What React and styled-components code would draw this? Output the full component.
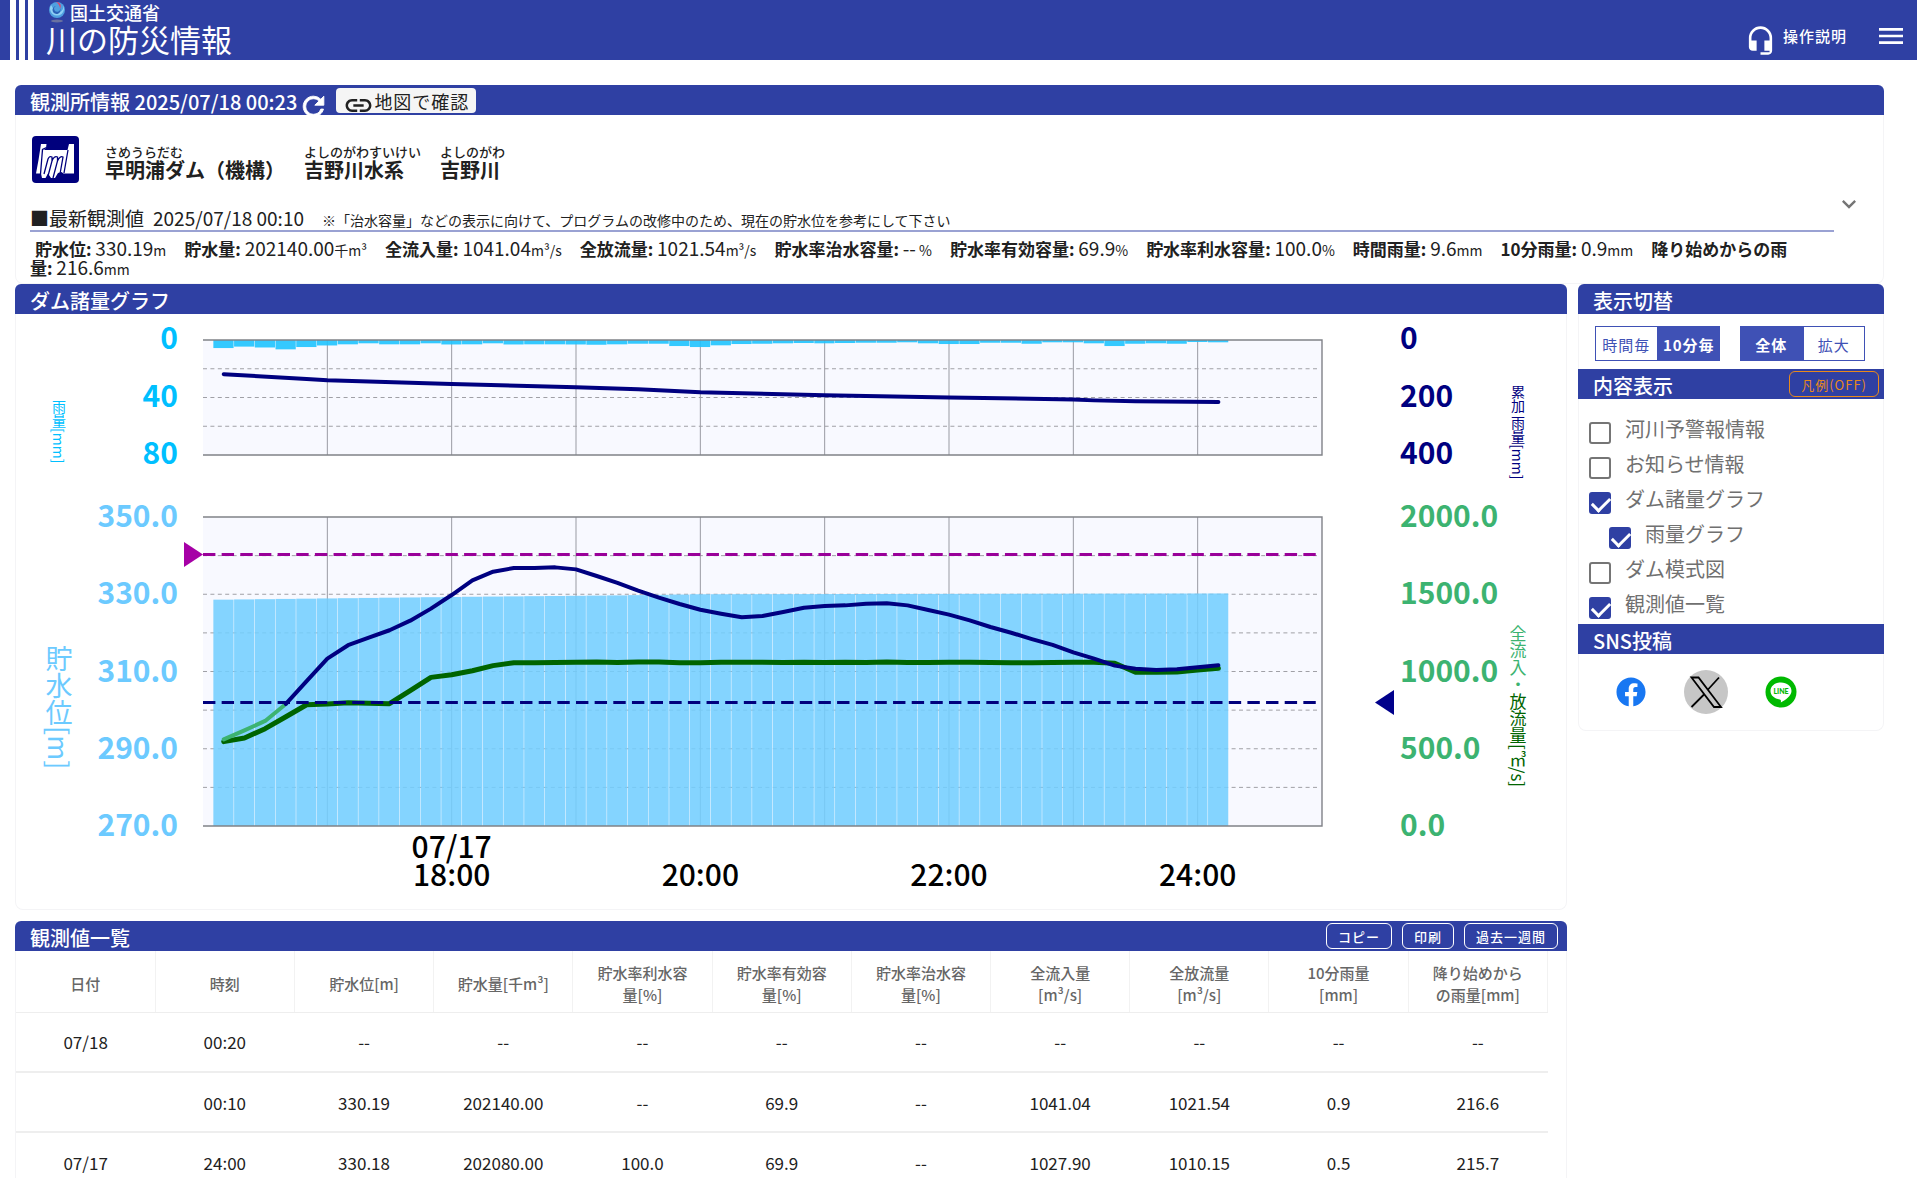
import React, { useState } from 'react';
import styled, { createGlobalStyle } from 'styled-components';
import { MdExpandMore, MdHeadsetMic, MdLink, MdMenu } from 'react-icons/md';
import { FaFacebook } from 'react-icons/fa';

const BLUE = '#2f40a3';
const NAVY = '#000080';
const SEA_GREEN = '#3cb371';

const GlobalStyle = createGlobalStyle`
  * {
    box-sizing: border-box;
  }
  body {
    margin: 0;
    background: #fff;
    color: #212121;
    font-family: 'Noto Sans CJK JP', 'Noto Sans', sans-serif;
    font-size: 16px;
  }
  button, input {
    font-family: inherit;
    margin: 0;
  }
`;

const Page = styled.div`
  height: calc(100vh - 14px);
  overflow: hidden;
`;

// ---- site header ----
const SiteHeader = styled.header`
  display: flex;
  height: 60px;
  padding-right: 10px;
  background: ${BLUE};
  color: #fff;
`;

const Stripes = styled.div`
  width: 24px;
  margin: 0 12px 0 10px;
  background: repeating-linear-gradient(to right, #fff 0 6px, transparent 6px 9px);
`;

const Brand = styled.a`
  display: flex;
  flex-direction: column;
  color: #fff;
  text-decoration: none;
`;

const Ministry = styled.span`
  display: flex;
  align-items: center;
  gap: 4px;
  height: 24px;
  padding-left: 2px;
  font-size: 18px;
  font-weight: 500;
`;

const SiteName = styled.span`
  font-size: 31px;
  line-height: 30px;
`;

const HeaderNav = styled.nav`
  display: flex;
  align-items: center;
  gap: 28px;
  margin-left: auto;
  padding-top: 12px;
`;

const HelpLink = styled.a`
  display: flex;
  align-items: flex-end;
  gap: 7px;
  color: #fff;
  font-size: 15px;
  font-weight: 500;
  letter-spacing: 1px;
  line-height: 40px;
  text-decoration: none;
`;

const IconButton = styled.button`
  display: flex;
  padding: 0;
  border: 0;
  background: none;
  color: ${(props) => props.$color || '#fff'};
  cursor: pointer;
`;

// ---- panels ----
const Main = styled.main`
  display: flex;
  flex-direction: column;
  padding: 25px 33px 0 15px;
`;

const Columns = styled.div`
  display: grid;
  grid-template-columns: minmax(0, 1fr) 306px;
  align-items: start;
  gap: 11px;
`;

const LeftColumn = styled.div`
  display: flex;
  flex-direction: column;
  gap: 11px;
`;

const Panel = styled.section`
  border-radius: 8px;
  border: 1px solid #f4f4f6;
  border-top: 0;
`;

const PanelBar = styled.div`
  display: flex;
  align-items: flex-start;
  height: 30px;
  margin: 0 -1px;
  padding: 0 ${(props) => (props.$square ? '5px' : '9px')} 0 15px;
  overflow: hidden;
  background: ${BLUE};
  color: #fff;
  border-radius: ${(props) => (props.$square ? '0' : '6px 6px 0 0')};
`;

const PanelTitle = styled.h2`
  margin: 0;
  font-size: 20px;
  font-weight: 500;
  line-height: 34px;
`;

const BarButtons = styled.div`
  display: flex;
  gap: 10px;
  margin-left: auto;
  padding-top: 2px;
`;

const OutlineButton = styled.button`
  height: 26px;
  padding: 0 11px;
  border: 1px solid ${(props) => props.$color || '#fff'};
  border-radius: 6px;
  background: none;
  color: ${(props) => props.$color || '#fff'};
  font-size: 13px;
  font-weight: ${(props) => (props.$color ? 400 : 500)};
  letter-spacing: 1px;
  line-height: 26px;
  cursor: pointer;
`;

const BarIcon = styled(IconButton)`
  padding: 6px 7px 0 1px;
`;

const MapButton = styled.button`
  display: flex;
  align-items: flex-start;
  height: 25px;
  margin-top: 3px;
  padding: 0 7px;
  overflow: hidden;
  border: 0;
  border-radius: 4px;
  background: #f5f5f5;
  color: #212121;
  font-size: 18px;
  letter-spacing: 1px;
  line-height: 26px;
  cursor: pointer;

  svg {
    flex: none;
    margin-top: 2px;
  }
`;

// ---- station information ----
const StationBody = styled.div`
  display: flex;
  align-items: center;
  padding: 21px 20px 6px 14px;
`;

const StationInfo = styled.div`
  flex: 1;
`;

const StationNames = styled.div`
  display: flex;
  gap: 19px;
  height: 47px;
  padding-left: 2px;

  svg {
    margin-right: 7px;
  }
`;

const StationName = styled.div`
  display: flex;
  flex-direction: column;
  padding-top: 8px;
  font-size: 20px;
  font-weight: 700;
  line-height: 20px;
`;

const Reading = styled.span`
  font-size: 13px;
  font-weight: 500;
  line-height: 16px;
`;

const Latest = styled.div`
  display: flex;
  align-items: baseline;
  gap: 9px;
  height: 27px;
  margin-top: 22px;
  border-bottom: 2px solid #9aa2d3;
  font-size: 19px;
  line-height: 26px;
`;

const Notice = styled.span`
  padding-left: 9px;
  font-size: 14px;
`;

const Stats = styled.div`
  padding: 7px 28px 0 0;
  font-size: 17px;
  line-height: 19px;
`;

const Stat = styled.span`
  margin-right: 13px;

  b {
    margin-left: 5px;
  }
  span {
    font-size: 19px;
    line-height: 0;
  }
  small {
    font-size: 14px;
    line-height: 0;
  }
`;

const Expander = styled(IconButton)`
  margin: 0 0 6px 1px;
`;

// ---- chart ----
const ChartSvg = styled.svg`
  display: block;
  width: 100%;
  height: auto;
`;

const AxisLabel = styled.text`
  font-size: 30px;
  font-weight: ${(props) => (props.$thin ? 500 : 700)};
`;

const AxisTitle = styled.text`
  font-size: ${(props) => props.$size}px;
  writing-mode: vertical-rl;
`;

// ---- table ----
const TableWrap = styled.div`
  padding-right: 18px;
`;

const Table = styled.table`
  width: 100%;
  border-collapse: collapse;
  table-layout: fixed;
`;

const HeadCell = styled.th`
  height: 61px;
  padding: 5px 20px 0;
  border-right: 1px solid #f2f2f2;
  border-bottom: 1px solid #eee;
  color: #666;
  font-size: 15px;
  font-weight: 500;
  line-height: 22px;
`;

const Cell = styled.td`
  height: 60px;
  padding: 0;
  border-bottom: 2px solid #eee;
  font-size: 17px;
  text-align: center;
`;

// ---- side column ----
const Toggles = styled.div`
  display: flex;
  gap: 20px;
  padding: 12px 18px 8px 16px;
`;

const ToggleGroup = styled.div`
  display: flex;
  flex: 1;
`;

const Toggle = styled.button`
  flex: 1;
  height: 35px;
  padding: 0;
  border: 1px solid #3f51b5;
  background: ${(props) => (props.$active ? '#3f51b5' : '#fff')};
  color: ${(props) => (props.$active ? '#fff' : '#3f51b5')};
  font-size: 15px;
  font-weight: ${(props) => (props.$active ? 700 : 400)};
  letter-spacing: 1px;
  line-height: 35px;
  white-space: nowrap;
  cursor: pointer;
`;

const CheckList = styled.div`
  display: flex;
  flex-direction: column;
  padding: 14px 10px 1px;
`;

const CheckLabel = styled.label`
  display: flex;
  align-items: flex-start;
  gap: 14px;
  height: 35px;
  padding-left: ${(props) => (props.$nested ? '20px' : '0')};
  color: #707070;
  font-size: 20px;
  line-height: 32px;
`;

const Check = styled.input`
  appearance: none;
  width: 22px;
  height: 22px;
  margin-top: 9px;
  border: 2px solid #757575;
  border-radius: 3px;

  &:checked {
    border-color: ${BLUE};
    background: ${BLUE};
  }
  &:checked::after {
    content: '';
    display: block;
    width: 15px;
    height: 8px;
    margin: 3px 1px;
    border: solid #fff;
    border-width: 0 0 3px 3px;
    transform: rotate(-45deg);
  }
`;

const Sns = styled.div`
  display: flex;
  align-items: center;
  gap: 31px;
  height: 76px;
  padding-left: 30px;

  a {
    display: flex;
    justify-content: center;
    width: 44px;
  }
`;

// rainfall per 10 minutes, from 16:10 to 24:10
const rain = [
  5.6, 4.6, 5.2, 6.5, 4.9, 3.8, 3, 2.3, 3, 3, 2.3, 3.1, 3, 2.3, 3.1, 3, 3, 3.1, 3.3, 3, 2.6, 2.6, 4.2, 4.9, 3.7,
  2.8, 2.6, 2.3, 2.1, 2.3, 2.1, 1.9, 1.9, 1.6, 2.3, 2.8, 2.8, 1.9, 1.9, 2.6, 1.6, 1.6, 2.3, 4.2, 2.6, 2.3, 2.6, 1.4, 1.6,
];

const inflow = [
  561, 619, 680, 790, 938, 1083, 1170, 1219, 1267, 1329, 1407, 1495, 1590, 1646, 1670, 1670, 1674, 1661, 1618, 1573,
  1523, 1478, 1437, 1400, 1374, 1351, 1359, 1385, 1413, 1424, 1428, 1439, 1441, 1428, 1398, 1368, 1331, 1288, 1251,
  1210, 1172, 1124, 1083, 1038, 1018, 1010, 1015, 1027, 1041,
];

const outflow = [
  546, 570, 630, 707, 785, 790, 798, 794, 792, 876, 962, 979, 1005, 1038, 1057, 1057, 1058, 1060, 1062, 1058, 1062,
  1062, 1056, 1056, 1060, 1060, 1060, 1058, 1060, 1058, 1060, 1058, 1062, 1058, 1058, 1060, 1060, 1058, 1057, 1057,
  1058, 1060, 1060, 1053, 995, 995, 997, 1010, 1021,
];

// [slot, value] pairs
const totalRain = [
  [1, 119], [5, 136], [6, 140], [12, 153], [18, 164], [21, 171], [22, 175], [24, 182], [30, 192], [36, 200],
  [42, 207], [43, 210], [45, 213], [49, 216],
];
const waterLevel = [[1, 328.6], [12, 329.3], [20, 329.7], [24, 330], [49, 330.2]];

const LEFT = 187;
const RIGHT = 1306;
const SLOT = (RIGHT - LEFT) / 54;
const RAIN_TOP = 26;
const RAIN_BOTTOM = 141;
const DAM_TOP = 203;
const DAM_BOTTOM = 512;

const xAt = (slot) => LEFT + slot * SLOT;
const rainY = (value, max) => RAIN_TOP + (value / max) * (RAIN_BOTTOM - RAIN_TOP);
const flowY = (value) => DAM_BOTTOM - (value / 2000) * (DAM_BOTTOM - DAM_TOP);
const levelY = (value) => DAM_BOTTOM - ((value - 270) / 80) * (DAM_BOTTOM - DAM_TOP);

// water level between the known points
const levelAt = (slot) => {
  const next = Math.max(1, waterLevel.findIndex(([s]) => s >= slot));
  const [s0, v0] = waterLevel[next - 1];
  const [s1, v1] = waterLevel[next];
  return v0 + ((v1 - v0) * (slot - s0)) / (s1 - s0);
};

const flowPoints = (values, from = 0) => values.map((v, i) => `${xAt(i + 1 + from)},${flowY(v)}`).join(' ');

function PlotGrid({ top, bottom, rows }) {
  const step = (bottom - top) / rows;
  return (
    <g fill="none">
      <rect x={LEFT} y={top} width={RIGHT - LEFT} height={bottom - top} fill="#f8f9ff" />
      {[1, 2, 3, 4, 5, 6, 7, 8].map((h) => (
        <path key={h} d={`M${xAt(h * 6)} ${top}V${bottom}`} stroke="#999ba3" />
      ))}
      {Array.from({ length: rows - 1 }, (_, i) => (
        <path key={i} d={`M${LEFT} ${top + step * (i + 1)}H${RIGHT - 3}`} stroke="#a0a0a6" strokeDasharray="4 3.4" />
      ))}
    </g>
  );
}

function PlotFrame({ top, bottom }) {
  return <path d={`M${LEFT} ${top}H${RIGHT}V${bottom}H${LEFT}`} fill="none" stroke="#808288" strokeWidth="1.4" />;
}

function DamChart() {
  return (
    <ChartSvg viewBox="0 0 1550 595" role="img" aria-label="ダム諸量グラフ">
      <PlotGrid top={RAIN_TOP} bottom={RAIN_BOTTOM} rows={4} />
      {rain.map((v, i) => (
        <rect key={i} x={xAt(i + 0.5)} y={RAIN_TOP} width={SLOT - 0.5} height={rainY(v, 80) - RAIN_TOP} fill="#1ec3ff" opacity="0.9" />
      ))}
      <PlotFrame top={RAIN_TOP} bottom={RAIN_BOTTOM} />
      <polyline
        points={totalRain.map(([s, v]) => `${xAt(s)},${rainY(v, 400)}`).join(' ')}
        fill="none" stroke={NAVY} strokeWidth="4" strokeLinecap="round" strokeLinejoin="round"
      />

      <PlotGrid top={DAM_TOP} bottom={DAM_BOTTOM} rows={8} />
      {rain.map((_, i) => {
        const y = levelY(levelAt(i + 1));
        return <rect key={i} x={xAt(i + 0.5)} y={y} width={SLOT - 0.5} height={DAM_BOTTOM - y} fill="#71ceff" opacity="0.86" />;
      })}
      <PlotFrame top={DAM_TOP} bottom={DAM_BOTTOM} />
      <g fill="none" strokeLinecap="round" strokeLinejoin="round">
        <polyline points={flowPoints(outflow)} stroke="#006400" strokeWidth="5" />
        <polyline points={flowPoints(inflow.slice(0, 4))} stroke={SEA_GREEN} strokeWidth="4" />
        <polyline points={flowPoints(inflow.slice(3), 3)} stroke={NAVY} strokeWidth="4" />
      </g>
      <g fill="none" strokeWidth="3" strokeDasharray="12.4 6.25">
        <path d={`M${LEFT} 240.5H${RIGHT - 6}`} stroke="#990099" />
        <path d={`M${LEFT} 388.5H${RIGHT - 6}`} stroke="#00007d" />
      </g>
      <path d="M168 228V253L187 240.5Z" fill="#a600a6" />
      <path d="M1378 376V401L1359 388.5Z" fill="#00008b" />

      <g textAnchor="end" fill="#00bfff">
        {[0, 40, 80].map((v) => <AxisLabel key={v} x="162" y={rainY(v, 80) + 9}>{v}</AxisLabel>)}
      </g>
      <g textAnchor="end" fill="#6ccaff">
        {[350, 330, 310, 290, 270].map((v) => <AxisLabel key={v} x="162" y={levelY(v) + 10}>{v.toFixed(1)}</AxisLabel>)}
      </g>
      <g fill={NAVY}>
        {[0, 200, 400].map((v) => <AxisLabel key={v} x="1384" y={rainY(v, 400) + 9}>{v}</AxisLabel>)}
      </g>
      <g fill={SEA_GREEN}>
        {[2000, 1500, 1000, 500, 0].map((v) => <AxisLabel key={v} x="1384" y={flowY(v) + 10}>{v.toFixed(1)}</AxisLabel>)}
      </g>
      <g textAnchor="middle" fill="#000">
        <AxisLabel $thin x={xAt(12)} y="544">07/17</AxisLabel>
        {[18, 20, 22, 24].map((h) => <AxisLabel $thin key={h} x={xAt((h - 16) * 6)} y="572">{h}:00</AxisLabel>)}
      </g>

      <AxisTitle $size={14} x="43" y="86" fill="#00bfff">雨量[mm]</AxisTitle>
      <AxisTitle $size={14} x="1502" y="71" fill={NAVY}>累加 雨量[mm]</AxisTitle>
      <AxisTitle $size={27} x="43" y="331" fill="#6ccaff">貯水位[m]</AxisTitle>
      <AxisTitle $size={17} x="1502" y="311" fill={SEA_GREEN}>
        全流入・<tspan fill="#006400">放流量[㎥/s]</tspan>
      </AxisTitle>
    </ChartSvg>
  );
}

function MinistryMark() {
  return (
    <svg width="18" height="22" viewBox="0 0 18 22" aria-hidden="true">
      <circle cx="9" cy="9" r="8" fill="#4f9fe0" />
      <path d="M3 4a7 7 0 1 0 12 0 6 6 0 0 1-3 7 4 4 0 0 1-6-2z" fill="#8fd0f5" />
      <path d="M8 5a4 4 0 1 0 4 2 3 3 0 1 1-4-2z" fill="#2b62b8" />
      <path d="M8 1c4 0 6 3 4 7 0-3-1-5-4-7z" fill="#e0446c" />
      <ellipse cx="9" cy="20" rx="6" ry="1.4" fill="#6a72a0" />
    </svg>
  );
}

function RefreshIcon() {
  return (
    <svg width="31" height="31" viewBox="0 0 24 24" aria-hidden="true">
      <path
        d="M17.65 6.35A7.958 7.958 0 0 0 12 4c-4.42 0-7.990 3.580-7.990 8s3.570 8 7.990 8c3.730 0 6.840-2.550 7.730-6h-2.080A5.990 5.990 0 0 1 12 18c-3.310 0-6-2.690-6-6s2.690-6 6-6c1.660 0 3.140.690 4.220 1.780L13 11h7V4l-2.350 2.350z"
        fill="currentColor" stroke="currentColor" strokeWidth="0.7"
      />
    </svg>
  );
}

function DamIcon() {
  return (
    <svg width="47" height="47" viewBox="0 0 47 47" aria-hidden="true">
      <rect width="47" height="47" rx="4" fill="#00007d" />
      <path d="M9 8H14.500L14 12L12 14H35.500L37 8H42V37.500H31.500L29.500 36L26 37L23 42H19L16 37.500L13.500 42H10L9 37.500H4L6.500 24Z" fill="#fff" />
      <path
        d="M14.500 11.500L10.500 13.500L8.500 38M12 38L16 23Q17.500 19.500 20 21V25L15.500 42M20 25Q22 19.500 25.500 21V25L21 42M25.500 25Q28 19.500 31 21L28 38M36 14L32 37"
        fill="none" stroke="#00007d" strokeWidth="1.300"
      />
    </svg>
  );
}

function XIcon() {
  return (
    <svg width="44" height="44" viewBox="0 0 44 44" aria-hidden="true">
      <circle cx="22" cy="22" r="22" fill="#c6c6c6" />
      <path
        d="M7.500 7.500H14.500L37 37H30ZM35 7.500L24 19.500M20 24.500L7.500 37"
        fill="none" stroke="#000" strokeWidth="1.800"
      />
    </svg>
  );
}

function LineIcon() {
  return (
    <svg width="32" height="32" viewBox="0 0 32 32" aria-hidden="true">
      <circle cx="16" cy="16" r="15.500" fill="#00b900" />
      <path d="M16 6.500c6 0 10.500 3.600 10.500 8.400 0 5-6.500 9.200-10.700 11.600.3-1.800.2-2.900-1-3.100C9.300 22.600 5.500 19.300 5.500 14.900 5.500 10.100 10 6.500 16 6.500z" fill="#fff" />
      <text x="16" y="17.500" textAnchor="middle" fontFamily="Lato, sans-serif" fontWeight="900" fontSize="7" fill="#00b900">LINE</text>
    </svg>
  );
}

const stats = [
  ['貯水位', '330.19', 'm'],
  ['貯水量', '202140.00', '千m³'],
  ['全流入量', '1041.04', 'm³/s'],
  ['全放流量', '1021.54', 'm³/s'],
  ['貯水率治水容量', '--', ' %'],
  ['貯水率有効容量', '69.9', '%'],
  ['貯水率利水容量', '100.0', '%'],
  ['時間雨量', '9.6', 'mm'],
  ['10分雨量', '0.9', 'mm'],
  ['降り始めからの雨量', '216.6', 'mm'],
];

const columns = [
  '日付', '時刻', '貯水位[m]', '貯水量[千m³]', '貯水率利水容量[%]', '貯水率有効容量[%]', '貯水率治水容量[%]',
  '全流入量\n[m³/s]', '全放流量\n[m³/s]', '10分雨量\n[mm]', '降り始めからの雨量[mm]',
];

const rows = [
  ['07/18', '00:20', '--', '--', '--', '--', '--', '--', '--', '--', '--'],
  ['', '00:10', '330.19', '202140.00', '--', '69.9', '--', '1041.04', '1021.54', '0.9', '216.6'],
  ['07/17', '24:00', '330.18', '202080.00', '100.0', '69.9', '--', '1027.90', '1010.15', '0.5', '215.7'],
];

const initialChecks = [
  { id: 'forecast', label: '河川予警報情報', checked: false },
  { id: 'news', label: 'お知らせ情報', checked: false },
  { id: 'damGraph', label: 'ダム諸量グラフ', checked: true },
  { id: 'rainGraph', label: '雨量グラフ', checked: true, nested: true },
  { id: 'damFigure', label: 'ダム模式図', checked: false },
  { id: 'values', label: '観測値一覧', checked: true },
];

function ToggleButtons({ options, initial }) {
  const [active, setActive] = useState(initial);
  return (
    <ToggleGroup>
      {options.map((option) => (
        <Toggle key={option} type="button" $active={option === active} onClick={() => setActive(option)}>
          {option}
        </Toggle>
      ))}
    </ToggleGroup>
  );
}

function SidePanel() {
  const [checks, setChecks] = useState(initialChecks);

  const toggle = (id) => {
    setChecks(checks.map((c) => (c.id === id ? { ...c, checked: !c.checked } : c)));
  };

  return (
    <Panel as="aside">
      <PanelBar><PanelTitle>表示切替</PanelTitle></PanelBar>
      <Toggles>
        <ToggleButtons options={['時間毎', '10分毎']} initial="10分毎" />
        <ToggleButtons options={['全体', '拡大']} initial="全体" />
      </Toggles>
      <PanelBar $square>
        <PanelTitle>内容表示</PanelTitle>
        <BarButtons><OutlineButton type="button" $color="#e8891c">凡例(OFF)</OutlineButton></BarButtons>
      </PanelBar>
      <CheckList>
        {checks.map((c) => (
          <CheckLabel key={c.id} htmlFor={c.id} $nested={c.nested}>
            <Check type="checkbox" id={c.id} checked={c.checked} onChange={() => toggle(c.id)} />
            {c.label}
          </CheckLabel>
        ))}
      </CheckList>
      <PanelBar $square><PanelTitle>SNS投稿</PanelTitle></PanelBar>
      <Sns>
        <a href="#facebook" aria-label="Facebook"><FaFacebook size={30} color="#1877f2" /></a>
        <a href="#x" aria-label="X"><XIcon /></a>
        <a href="#line" aria-label="LINE"><LineIcon /></a>
      </Sns>
    </Panel>
  );
}

function StationPanel() {
  return (
    <Panel>
      <PanelBar>
        <PanelTitle>観測所情報 2025/07/18 00:23</PanelTitle>
        <BarIcon type="button" aria-label="更新"><RefreshIcon /></BarIcon>
        <MapButton type="button"><MdLink size={31} />地図で確認</MapButton>
      </PanelBar>
      <StationBody>
        <StationInfo>
          <StationNames>
            <DamIcon />
            <StationName><Reading>さめうらだむ</Reading>早明浦ダム（機構）</StationName>
            <StationName><Reading>よしのがわすいけい</Reading>吉野川水系</StationName>
            <StationName><Reading>よしのがわ</Reading>吉野川</StationName>
          </StationNames>
          <Latest>
            <span>■最新観測値</span>
            <span>2025/07/18 00:10</span>
            <Notice>※「治水容量」などの表示に向けて、プログラムの改修中のため、現在の貯水位を参考にして下さい</Notice>
          </Latest>
          <Stats>
            {stats.map(([name, value, unit]) => (
              <Stat key={name}>
                <b>{name}:</b> <span>{value}</span><small>{unit}</small>
              </Stat>
            ))}
          </Stats>
        </StationInfo>
        <Expander type="button" $color="#757575" aria-label="詳細を開く"><MdExpandMore size={28} /></Expander>
      </StationBody>
    </Panel>
  );
}

function ObservationTable() {
  return (
    <Panel>
      <PanelBar>
        <PanelTitle>観測値一覧</PanelTitle>
        <BarButtons>
          <OutlineButton type="button">コピー</OutlineButton>
          <OutlineButton type="button">印刷</OutlineButton>
          <OutlineButton type="button">過去一週間</OutlineButton>
        </BarButtons>
      </PanelBar>
      <TableWrap>
        <Table>
          <thead>
            <tr>
              {columns.map((name) => (
                <HeadCell key={name} scope="col">
                  {name.split('\n').map((line) => <div key={line}>{line}</div>)}
                </HeadCell>
              ))}
            </tr>
          </thead>
          <tbody>
            {rows.map((row) => (
              <tr key={row[1]}>
                {row.map((value, i) => <Cell key={i}>{value}</Cell>)}
              </tr>
            ))}
          </tbody>
        </Table>
      </TableWrap>
    </Panel>
  );
}

function App() {
  return (
    <>
      <GlobalStyle />
      <Page>
        <SiteHeader>
          <Stripes />
          <Brand href="#top">
            <Ministry><MinistryMark />国土交通省</Ministry>
            <SiteName>川の防災情報</SiteName>
          </Brand>
          <HeaderNav>
            <HelpLink href="#help"><MdHeadsetMic size={31} />操作説明</HelpLink>
            <IconButton type="button" aria-label="メニュー"><MdMenu size={32} /></IconButton>
          </HeaderNav>
        </SiteHeader>
        <Main>
          <StationPanel />
          <Columns>
            <LeftColumn>
              <Panel>
                <PanelBar><PanelTitle>ダム諸量グラフ</PanelTitle></PanelBar>
                <DamChart />
              </Panel>
              <ObservationTable />
            </LeftColumn>
            <SidePanel />
          </Columns>
        </Main>
      </Page>
    </>
  );
}

export default App;
